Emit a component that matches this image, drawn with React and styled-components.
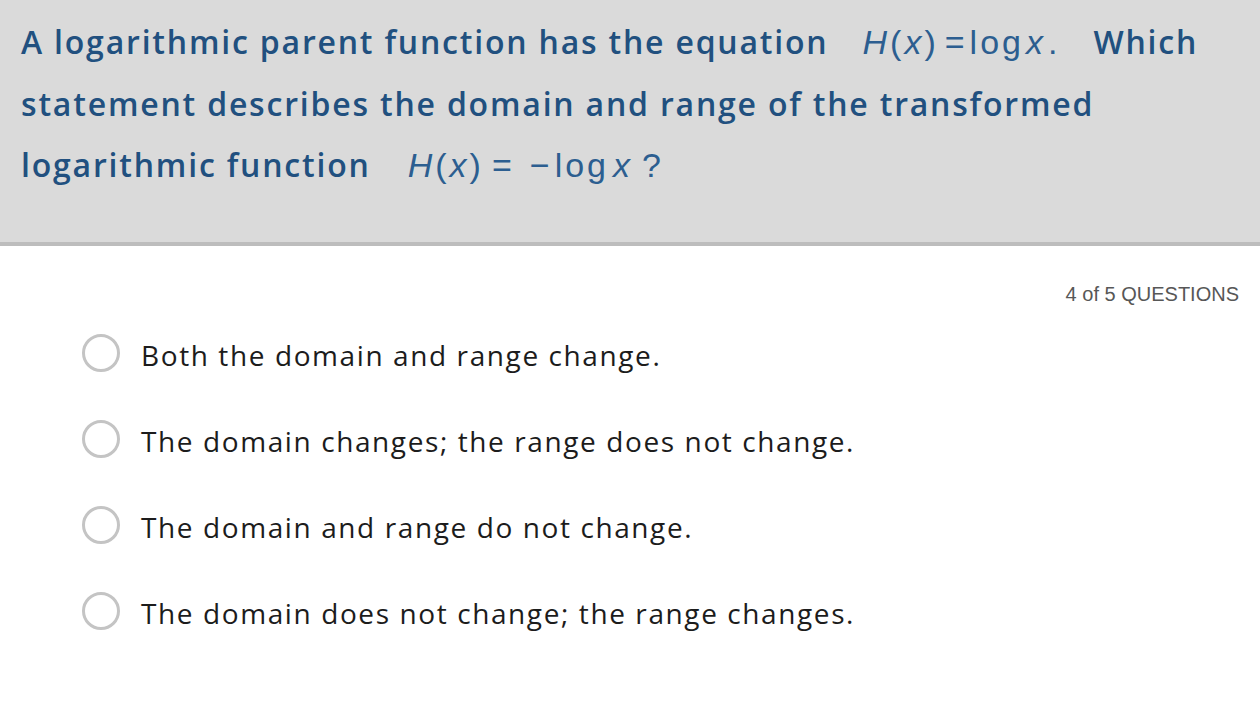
import styled, { createGlobalStyle } from 'styled-components';

const GlobalStyle = createGlobalStyle`
	html, body {
		margin: 0;
		padding: 0;
		background: #ffffff;
	}
	body {
		font-family: 'Open Sans', 'Noto Sans', sans-serif;
	}
`;

const Page = styled.div`
	width: 1260px;
	height: 702px;
	overflow: hidden;
	background: #ffffff;
`;

const Prompt = styled.header`
	box-sizing: border-box;
	height: 246px;
	padding: 11px 21px 0;
	background: #dadada;
	border-bottom: 4px solid #bdbdbd;
`;

const PromptText = styled.p`
	margin: 0;
	color: #21507f;
	font-family: 'Open Sans', sans-serif;
	font-weight: 600;
	font-size: 32px;
	line-height: 61px;
	letter-spacing: 1.8px;
	white-space: nowrap;
`;

const Math = styled.span`
	color: #2c5e90;
	font-family: 'Liberation Sans', sans-serif;
	font-weight: 400;
	font-size: 34px;
	letter-spacing: 3px;
	margin: ${props => props.margin || '0 33px 0 34px'};
`;

const Var = styled.i`
	font-style: italic;
	margin-left: ${props => props.before || 0}px;
`;

const Op = styled.span`
	margin-left: ${props => props.left || 0}px;
	margin-right: ${props => props.right || 0}px;
`;

const Counter = styled.div`
	display: flex;
	justify-content: flex-end;
	padding: 37px 21px 0 0;
	color: #575757;
	font-family: 'Liberation Sans', Arial, sans-serif;
	font-size: 20px;
	line-height: 22px;
`;

const Options = styled.ul`
	list-style: none;
	margin: 0;
	padding: 29px 0 0 82px;
	display: flex;
	flex-direction: column;
	gap: 48px;
`;

const Option = styled.li`
	display: flex;
	align-items: center;
	gap: 21px;
	height: 38px;
`;

const Radio = styled.span`
	box-sizing: border-box;
	width: 38px;
	height: 38px;
	border-radius: 50%;
	border: 3px solid #c4c4c4;
	flex-shrink: 0;
`;

const Label = styled.span`
	color: #1c1c1c;
	font-family: 'Open Sans', sans-serif;
	font-size: 28px;
	line-height: 38px;
	letter-spacing: 1.6px;
	padding-top: 3px;
`;

const answers = [
	'Both the domain and range change.',
	'The domain changes; the range does not change.',
	'The domain and range do not change.',
	'The domain does not change; the range changes.',
];

export default function App() {
	return (
		<Page>
			<GlobalStyle />
			<Prompt>
				<PromptText>
					A logarithmic parent function has the equation
					<Math>
						<Var>H</Var>(<Var>x</Var>)<Op left={6} right={2}>=</Op>log<Var before={2}>x</Var>
						<Op left={2}>.</Op>
					</Math>
					Which
					<br />
					statement describes the domain and range of the transformed
					<br />
					logarithmic function
					<Math margin='0 0 0 37px'>
						<Var>H</Var>(<Var>x</Var>)<Op left={8} right={15}>=</Op>
						<Op right={2}>−</Op>log<Var before={4}>x</Var>
						<Op left={9}>?</Op>
					</Math>
				</PromptText>
			</Prompt>
			<Counter>4 of 5 QUESTIONS</Counter>
			<Options>
				{answers.map(text => (
					<Option key={text}>
						<Radio />
						<Label>{text}</Label>
					</Option>
				))}
			</Options>
		</Page>
	);
}
